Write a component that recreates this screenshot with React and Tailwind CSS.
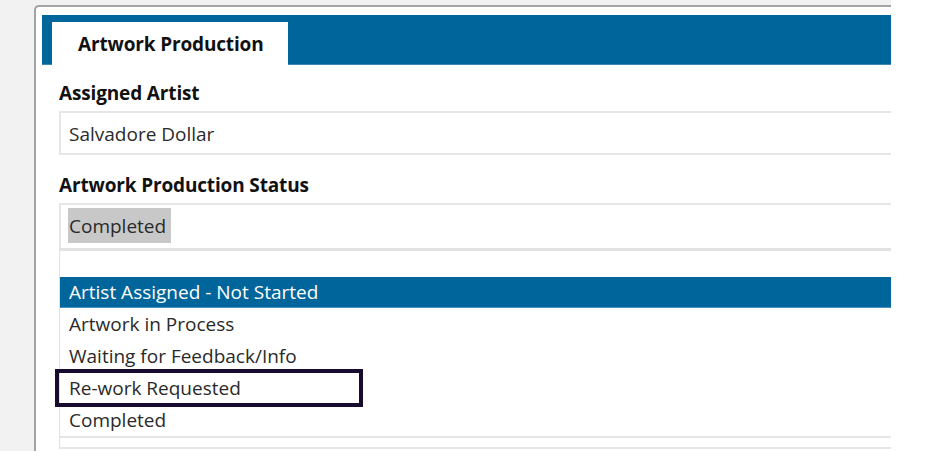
const options = [
  'Artwork in Process',
  'Waiting for Feedback/Info',
  'Re-work Requested',
  'Completed',
];

export default function App() {
  return (
    <div className="relative w-[946px] h-[451px] bg-white flex overflow-hidden" style={{ fontFamily: '"Open Sans", "Noto Sans", sans-serif' }}>
      <div className="w-[891px] h-full shrink-0 bg-[#f2f2f2] pl-[34px] pt-[5px] overflow-hidden">
        <div className="w-[900px] h-[460px] bg-white rounded-tl-[5px] border-l-2 border-t-2 border-[#a3a3a3] pl-[6px] pt-[8px]">
          {/* tab strip */}
          <div className="h-[50px] bg-[#00659a] border-b border-[#3f86b3] pl-[10px] pt-[7px]">
            <div className="w-[236px] h-[43px] bg-white pl-[26px] pt-[1px] flex items-center text-[19px] font-bold text-[#111] tracking-[-0.15px]">
              Artwork Production
            </div>
          </div>

          <div className="pl-[17px] text-[19px] text-[#2a2a2a]">
            <div className="h-[46px] pt-[16px] font-bold text-[#111] tracking-[-0.15px] leading-[24px]">Assigned Artist</div>
            <div className="h-[44px] border-y-2 border-l-2 border-[#e6e6e6] pl-[8px] pt-[3px] flex items-center">
              Salvadore Dollar
            </div>

            <div className="h-[48px] pt-[18px] font-bold text-[#111] tracking-[-0.15px] leading-[24px]">Artwork Production Status</div>
            <div className="h-[45px] border-t-2 border-l-2 border-[#e6e6e6] pl-[7px] pt-[3px]">
              <span className="inline-flex items-center h-[35px] pl-[1px] pr-[5px] pt-[2px] bg-[#c8c8c8]">Completed</span>
            </div>

            {/* open list */}
            <div className="border-t-[3px] border-l border-[#e2e2e2] pt-[26px]">
              <div className="h-[31px] bg-[#00659a] border-b border-[#4a8fbb] text-white pl-[9px] pt-[1px] flex items-center">
                Artist Assigned - Not Started
              </div>
              {options.map(o => (
                <div key={o} className="h-[32px] pl-[9px] pt-[1px] flex items-center">
                  {o}
                </div>
              ))}
              <div className="h-[11px] border-t-2 border-[#e6e6e6]" />
              <div className="border-t-2 border-[#e6e6e6]" />
            </div>
          </div>
        </div>
      </div>

      {/* marker drawn over the list */}
      <div className="absolute left-[55px] top-[369px] w-[308px] h-[38px] border-[4px] border-[#170b2e]" />
    </div>
  );
}
